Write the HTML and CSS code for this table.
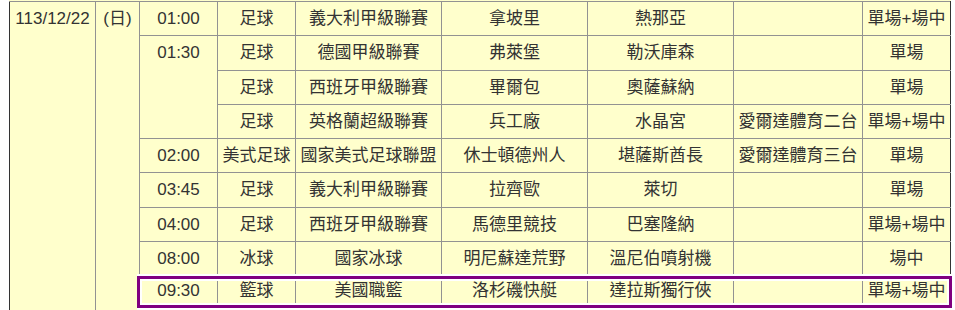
FILE: index.html
```html
<!DOCTYPE html>
<html lang="zh-Hant">
<head>
<meta charset="utf-8">
<title>賽事轉播表</title>
<link rel="stylesheet" href="styles.css">
</head>
<body>
<div class="sched">
  <table class="grid">
    <colgroup>
      <col class="c-date"><col class="c-day"><col class="c-time"><col class="c-sport"><col class="c-league"><col class="c-team"><col class="c-team"><col class="c-ch"><col class="c-bet">
    </colgroup>
    <tbody>
      <tr>
        <td rowspan="9" class="date top">113/12/22</td>
        <td rowspan="9" class="top">(日)</td>
        <td>01:00</td><td>足球</td><td>義大利甲級聯賽</td><td>拿坡里</td><td>熱那亞</td><td></td><td>單場+場中</td>
      </tr>
      <tr>
        <td rowspan="3" class="top">01:30</td>
        <td>足球</td><td>德國甲級聯賽</td><td>弗萊堡</td><td>勒沃庫森</td><td></td><td>單場</td>
      </tr>
      <tr>
        <td>足球</td><td>西班牙甲級聯賽</td><td>畢爾包</td><td>奧薩蘇納</td><td></td><td>單場</td>
      </tr>
      <tr>
        <td>足球</td><td>英格蘭超級聯賽</td><td>兵工廠</td><td>水晶宮</td><td>愛爾達體育二台</td><td>單場+場中</td>
      </tr>
      <tr>
        <td>02:00</td><td>美式足球</td><td>國家美式足球聯盟</td><td>休士頓德州人</td><td>堪薩斯酋長</td><td>愛爾達體育三台</td><td>單場</td>
      </tr>
      <tr>
        <td>03:45</td><td>足球</td><td>義大利甲級聯賽</td><td>拉齊歐</td><td>萊切</td><td></td><td>單場</td>
      </tr>
      <tr>
        <td>04:00</td><td>足球</td><td>西班牙甲級聯賽</td><td>馬德里競技</td><td>巴塞隆納</td><td></td><td>單場+場中</td>
      </tr>
      <tr>
        <td>08:00</td><td>冰球</td><td>國家冰球</td><td>明尼蘇達荒野</td><td>溫尼伯噴射機</td><td></td><td>場中</td>
      </tr>
      <tr class="hl">
        <td>09:30</td><td>籃球</td><td>美國職籃</td><td>洛杉磯快艇</td><td>達拉斯獨行俠</td><td></td><td>單場+場中</td>
      </tr>
    </tbody>
  </table>
  <div class="hl-frame" aria-hidden="true"></div>
</div>
</body>
</html>
```
FILE: styles.css
```css
html, body {
  margin: 0;
  padding: 0;
  background: #ffffff;
}

.sched {
  position: relative;
  width: fit-content;
  margin-left: 9px;
  padding-top: 1px;
  background: #ffffcc;
}

.grid {
  border-collapse: collapse;
  table-layout: fixed;
  width: 942px;
  background: #ffffcc;
  color: #333333;
  font: 17px/19.29px "Liberation Sans", "Noto Sans CJK TC", sans-serif;
}

.c-date { width: 86px; }
.c-day { width: 44px; }
.c-time { width: 78px; }
.c-sport { width: 78px; }
.c-league { width: 146px; }
.c-team { width: 146px; }
.c-ch { width: 129px; }
.c-bet { width: 88px; }

.grid td {
  border: 1px solid #929292;
  padding: 7px 0;
  text-align: center;
  vertical-align: middle;
  white-space: nowrap;
  overflow: hidden;
}

.grid td.top {
  vertical-align: top;
}

.grid td.date {
  border-left: 1px solid #333333;
}

.grid td:last-child {
  border-right: 1px solid #333333;
}

.grid tr.hl td {
  padding: 5px 0 20px;
  vertical-align: top;
}

.hl-frame {
  position: absolute;
  left: 128px;
  top: 276px;
  width: 815px;
  height: 32px;
  box-sizing: border-box;
  border: 3px solid #800080;
  box-shadow: inset 0 0 0 2px #ffffff, 0 -2px 0 0 #ffffff, 0 2px 0 0 #ffffff;
  pointer-events: none;
}
```
